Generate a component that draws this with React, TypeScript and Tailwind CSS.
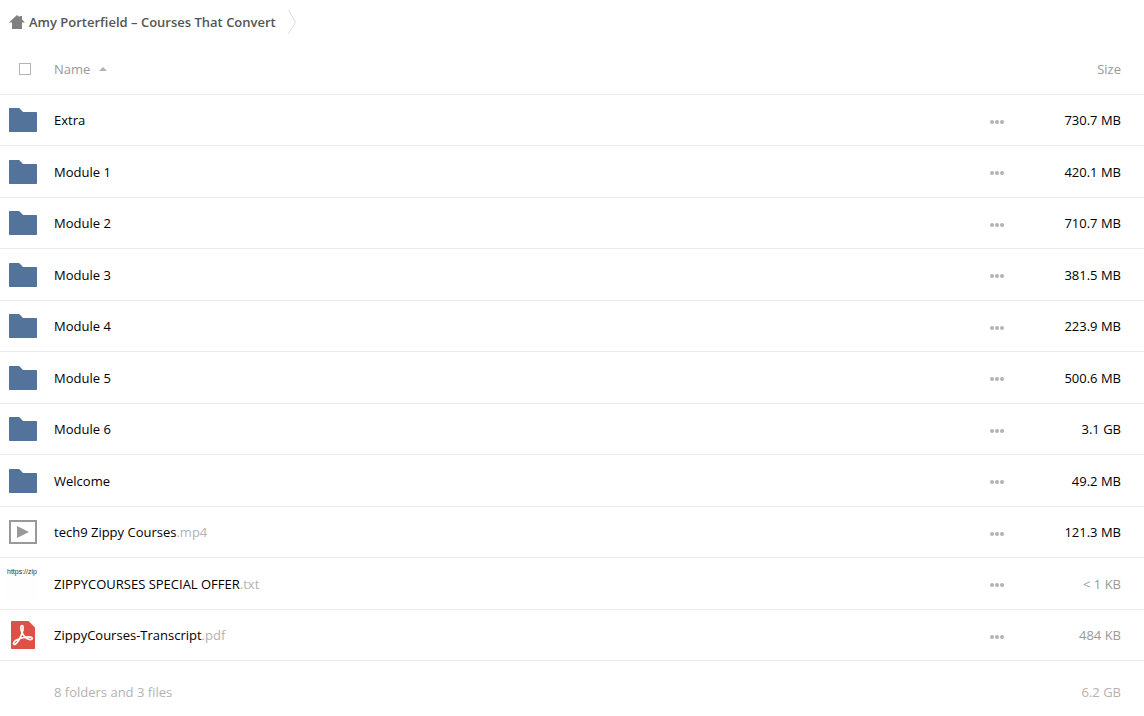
import React from 'react';

type Kind = 'folder' | 'video' | 'text' | 'pdf';

interface Item {
  name: string;
  ext?: string;
  kind: Kind;
  size: string;
}

const items: Item[] = [
  { name: 'Extra', kind: 'folder', size: '730.7 MB' },
  { name: 'Module 1', kind: 'folder', size: '420.1 MB' },
  { name: 'Module 2', kind: 'folder', size: '710.7 MB' },
  { name: 'Module 3', kind: 'folder', size: '381.5 MB' },
  { name: 'Module 4', kind: 'folder', size: '223.9 MB' },
  { name: 'Module 5', kind: 'folder', size: '500.6 MB' },
  { name: 'Module 6', kind: 'folder', size: '3.1 GB' },
  { name: 'Welcome', kind: 'folder', size: '49.2 MB' },
  { name: 'tech9 Zippy Courses', ext: '.mp4', kind: 'video', size: '121.3 MB' },
  { name: 'ZIPPYCOURSES SPECIAL OFFER', ext: '.txt', kind: 'text', size: '< 1 KB' },
  { name: 'ZippyCourses-Transcript', ext: '.pdf', kind: 'pdf', size: '484 KB' },
];

const HomeIcon: React.FC = () => (
  <svg width="16" height="14" viewBox="0 0 16 14" fill="#808080" aria-hidden="true">
    <path d="M8 0 10.5 2.3V1H13v3.6L16 7.5H13V14H3V7.5H0Z" />
  </svg>
);

const FolderIcon: React.FC = () => (
  <svg width="28" height="24" viewBox="0 0 28 24" fill="#54739b" aria-hidden="true">
    <path d="M.7 0H10.2L14 4H27.3Q28 4 28 4.7V23.3Q28 24 27.3 24H.7Q0 24 0 23.3V.7Q0 0 .7 0Z" />
  </svg>
);

const VideoIcon: React.FC = () => (
  <svg width="28" height="24" viewBox="0 0 28 24" aria-hidden="true">
    <rect x="1" y="1" width="26" height="22" fill="#fff" stroke="#999" strokeWidth="2" />
    <path d="M8 6 20 12 8 18Z" fill="#999" />
  </svg>
);

const PdfIcon: React.FC = () => (
  <svg width="24" height="28" viewBox="0 0 24 28" aria-hidden="true">
    <path d="M.7 0H17.5L24 6.5V27.3Q24 28 23.3 28H.7Q0 28 0 27.3V.7Q0 0 .7 0Z" fill="#de5148" />
    <path
      d="M10.9 4.6C9.6 4.7 9.6 7 10.2 9.2C11.2 13.2 14.6 17 17.7 18.2C19.8 19 21.4 18.5 21.3 17.3C21.2 16 18.6 15.7 15.6 16C11.5 16.4 7.4 17.7 4.7 19.5C2.8 20.8 2 22.4 2.9 23.2C4.1 24.1 6.4 21.7 8.3 18.3C10.3 14.7 11.9 10.2 12.1 7.3C12.2 5.6 11.9 4.5 10.9 4.6Z"
      fill="none"
      stroke="#fff"
      strokeWidth="1.7"
      strokeLinejoin="round"
    />
  </svg>
);

const TextThumb: React.FC = () => (
  <div className="h-8 w-8 overflow-hidden bg-[#fefefe] font-['Liberation_Sans',sans-serif] text-[7px] leading-2 whitespace-nowrap text-[#333]">
    https://zip
  </div>
);

const icons: Record<Kind, React.FC> = {
  folder: FolderIcon,
  video: VideoIcon,
  text: TextThumb,
  pdf: PdfIcon,
};

const Breadcrumb: React.FC = () => (
  <nav aria-label="Breadcrumb" className="flex h-11 items-center pl-[9px]">
    <a href="#" className="flex items-center gap-1 font-semibold text-[#555]">
      <HomeIcon />
      Amy Porterfield – Courses That Convert
    </a>
    <svg className="ml-3" width="8" height="24" viewBox="0 0 8 24" fill="none" stroke="#ddd" aria-hidden="true">
      <path d="M.5 0 7.5 12 .5 24" />
    </svg>
  </nav>
);

const ItemRow: React.FC<{ item: Item }> = ({ item }) => {
  const Icon = icons[item.kind];
  const small = item.size.endsWith('KB');

  return (
    <tr className="h-[51px] even:h-[52px] *:border-b *:border-[#ebebeb]">
      <td>
        <div className="flex w-[46px] justify-center">
          <Icon />
        </div>
      </td>
      <td className="pl-2">
        <a href="#" className="text-black">
          {item.name}
          {item.ext && <span className="text-[#b3b3b3]">{item.ext}</span>}
        </a>
      </td>
      <td>
        <button type="button" aria-label={`Actions for ${item.name}`} className="flex h-[25px] w-full items-center justify-center pt-[3px]">
          <svg width="14" height="4" viewBox="0 0 14 4" fill="#b3b3b3" aria-hidden="true">
            <circle cx="2" cy="2" r="2" />
            <circle cx="7" cy="2" r="2" />
            <circle cx="12" cy="2" r="2" />
          </svg>
        </button>
      </td>
      <td className={small ? 'pr-[23px] text-right text-[#999]' : 'pr-[23px] text-right text-black'}>{item.size}</td>
    </tr>
  );
};

export default function App() {
  return (
    <main className="min-h-screen bg-white font-['Open_Sans',sans-serif] text-[13px] leading-5">
      <Breadcrumb />
      <table className="w-full table-fixed border-separate border-spacing-0">
        <colgroup>
          <col className="w-[46px]" />
          <col />
          <col className="w-[54px]" />
          <col className="w-[120px]" />
        </colgroup>
        <thead>
          <tr className="h-[51px] text-[#999] *:border-b *:border-[#ebebeb] *:font-normal">
            <th>
              <input
                type="checkbox"
                aria-label="Select all"
                className="ml-[19px] block size-3 appearance-none border border-[#b3b3b3] bg-white checked:bg-[#b3b3b3]"
              />
            </th>
            <th className="pl-2 text-left" aria-sort="ascending">
              <button type="button" className="flex items-center gap-[9px]">
                Name
                <svg width="8" height="4" viewBox="0 0 8 4" fill="#b3b3b3" aria-hidden="true">
                  <path d="M4 0 8 4H0Z" />
                </svg>
              </button>
            </th>
            <th />
            <th className="pr-[23px] text-right">Size</th>
          </tr>
        </thead>
        <tbody>
          {items.map((item) => (
            <ItemRow key={item.name} item={item} />
          ))}
        </tbody>
        <tfoot>
          <tr className="h-[54px] text-[#b3b3b3]">
            <td />
            <td className="pt-2 pl-2">8 folders and 3 files</td>
            <td />
            <td className="pt-2 pr-[23px] text-right">6.2 GB</td>
          </tr>
        </tfoot>
      </table>
    </main>
  );
}
